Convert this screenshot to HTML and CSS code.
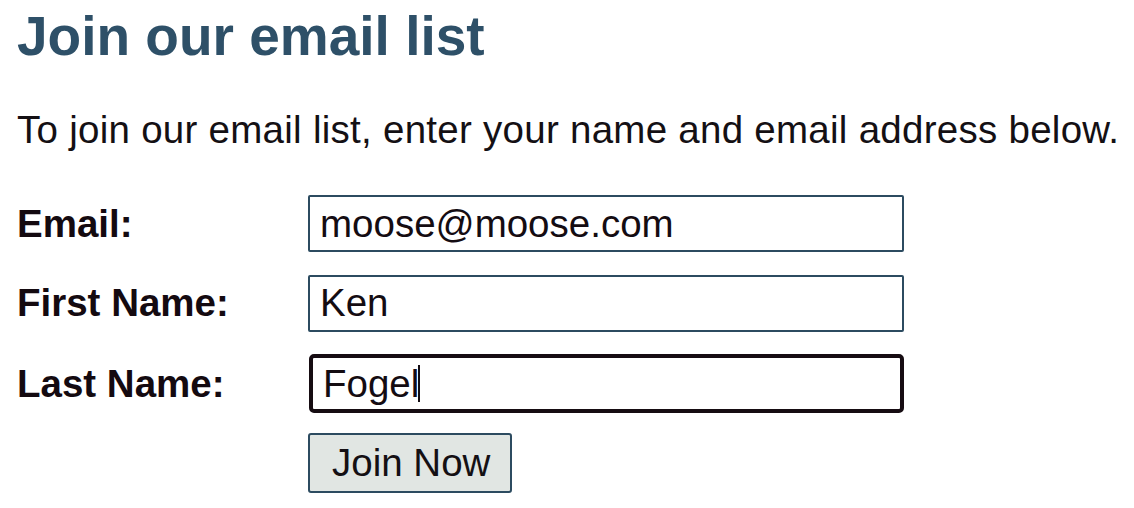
FILE: index.html
```html
<!DOCTYPE html>
<html lang="en">
<head>
<meta charset="utf-8">
<title>Join our email list</title>
<link rel="stylesheet" href="styles.css">
</head>
<body>
<main class="page">
  <h1 class="title">Join our email list</h1>
  <p class="intro">To join our email list, enter your name and email address below.</p>
  <form class="signup" action="#" onsubmit="return false">
    <label class="label" for="email">Email:</label>
    <input class="field" id="email" type="text" value="moose@moose.com">
    <label class="label" for="first">First Name:</label>
    <input class="field" id="first" type="text" value="Ken">
    <label class="label" for="last">Last Name:</label>
    <div class="field-wrap">
      <input class="field field-focused" id="last" type="text" value="Fogel">
      <span class="caret"></span>
    </div>
    <span></span>
    <div class="actions"><button class="submit" type="submit">Join Now</button></div>
  </form>
</main>
</body>
</html>
```
FILE: styles.css
```css
html, body {
  margin: 0;
  padding: 0;
  background: #ffffff;
}

.page {
  padding: 5px 0 0 17px;
  font-family: "Liberation Sans", Arial, sans-serif;
  color: #141014;
}

.title {
  margin: 0;
  font-size: 55px;
  line-height: 62px;
  font-weight: bold;
  color: #2e5068;
}

.intro {
  margin: 41px 0 0 0;
  font-size: 38.5px;
  line-height: 44px;
  letter-spacing: 0.27px;
  white-space: nowrap;
}

.signup {
  margin-top: 43px;
  display: grid;
  grid-template-columns: 291px 596px;
  row-gap: 22.5px;
  align-items: center;
}

.label {
  font-size: 38.5px;
  font-weight: bold;
  line-height: 44px;
  color: #140a10;
}

.field {
  box-sizing: border-box;
  width: 596px;
  height: 57px;
  margin: 0;
  padding: 0 10px;
  border: 2px solid #2c4b60;
  border-radius: 2px;
  background: #ffffff;
  font-family: "Liberation Sans", Arial, sans-serif;
  font-size: 38.5px;
  color: #140c12;
  outline: none;
}

.field-wrap {
  position: relative;
  width: 596px;
}

.field-focused {
  display: block;
  height: 59px;
  margin-left: 1px;
  width: 595px;
  border: 4px solid #160c12;
  border-radius: 5px;
}

.caret {
  position: absolute;
  left: 110px;
  top: 11px;
  width: 2px;
  height: 37px;
  background: #140c12;
}

.actions {
  margin-top: -3px;
}

.submit {
  box-sizing: border-box;
  height: 60px;
  padding: 0 20px 0 22px;
  margin: 0;
  border: 2px solid #2c4b60;
  border-radius: 3px;
  background: #e1e6e3;
  font-family: "Liberation Sans", Arial, sans-serif;
  font-size: 38.5px;
  color: #141014;
  cursor: pointer;
}
```
